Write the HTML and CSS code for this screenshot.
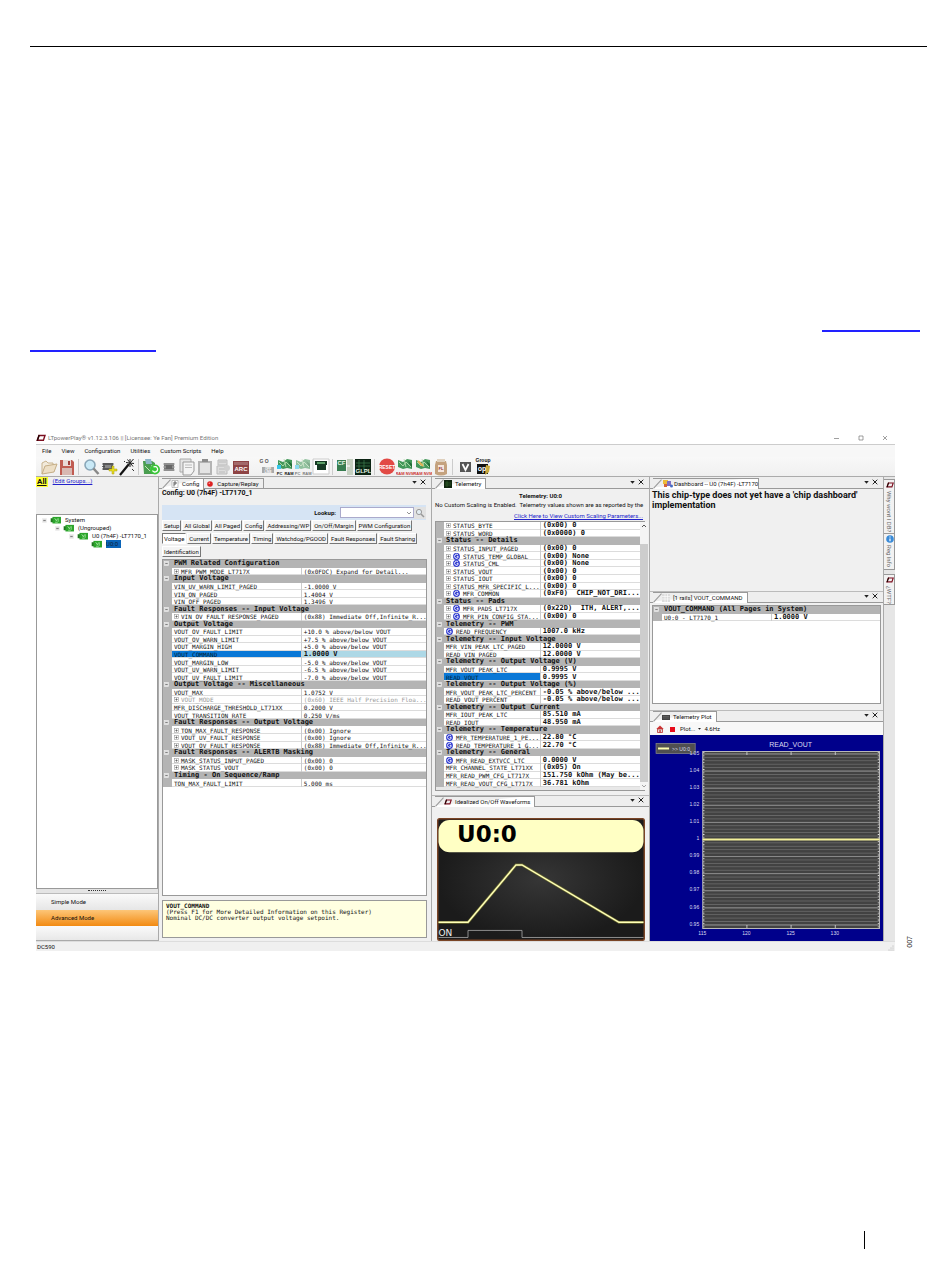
FILE: index.html
```html
<!DOCTYPE html>
<html lang="en">
<head>
<meta charset="utf-8">
<title>LTpowerPlay</title>
<link rel="stylesheet" href="styles.css">
</head>
<body>
<svg class="defs" aria-hidden="true">
  <symbol id="plus" viewBox="0 0 5 5"><rect x=".5" y=".5" width="4" height="4" fill="#fff" stroke="#999" stroke-width=".6"/><path d="M1.3 2.5h2.4M2.5 1.3v2.4" stroke="#444" stroke-width=".6"/></symbol>
  <symbol id="minus" viewBox="0 0 5 5"><rect x=".5" y=".5" width="4" height="4" fill="#ddd" stroke="#eee" stroke-width=".6"/><path d="M1.3 2.5h2.4" stroke="#444" stroke-width=".6"/></symbol>
  <symbol id="g" viewBox="0 0 8 8"><circle cx="4" cy="4" r="3.9" fill="#2a35cf"/><path d="M5.9 2.5A2.3 2.3 0 1 0 6 5V4.2H4.2" fill="none" stroke="#fff" stroke-width="1.1"/></symbol>
  <symbol id="lt" viewBox="0 0 10 8"><path d="M3 1.500h6L7.400 6.300H1.200z" fill="none" stroke="#7c0f20" stroke-width="1.400"/><path d="M3.200 1L1.400 6.600" stroke="#200" stroke-width="1.400"/></symbol>
  <symbol id="board" viewBox="0 0 12 9"><rect x="2" y="1" width="9.6" height="7.4" fill="#2ba52b"/><path d="M0 2.5h2.5v4.5H0z" fill="#1d7a1d"/><path d="M4.5 2.5l2 3 1-2.500M8.500 2.500v4M5 7h3" stroke="#b4efb0" stroke-width=".8" fill="none"/></symbol>
  <symbol id="ram" viewBox="0 0 18 18"><path d="M2 2l5 2 4-3 5 1v9l-5-1-4 1-5-2z" fill="#43985a"/><path d="M3 4l4 4 3-4 5 5M8 1l2 8" stroke="#b6ddb0" stroke-width=".9" fill="none"/><path d="M12 3l4 3v4z" fill="#216b36"/></symbol>
  <symbol id="menu" viewBox="0 0 6 4"><path d="M0 0h6L3 3.500z" fill="#222"/></symbol>
  <symbol id="close" viewBox="0 0 6 6"><path d="M.7.7l4.600 4.600M5.300.7L.7 5.300" stroke="#222" stroke-width="1"/></symbol>
</svg>

<div class="page">
  <div class="rule"></div>
  <div class="links"><span class="ul end"></span><span class="ul start"></span></div>

  <div class="figure">
  <main class="app">
    <header class="titlebar">
      <svg class="logo"><use href="#lt"/></svg>
      <span class="caption">LTpowerPlay® v1.12.3.106 || [Licensee: Ye Fan] Premium Edition</span>
      <button class="win" aria-label="Minimize"><svg viewBox="0 0 6 6"><path d="M0 3.500h5" stroke="#777" stroke-width=".7"/></svg></button>
      <button class="win" aria-label="Maximize"><svg viewBox="0 0 6 6"><path d="M1 1h4v4H1z" stroke="#777" stroke-width=".7" fill="none"/></svg></button>
      <button class="win" aria-label="Close"><svg viewBox="0 0 6 6"><path d="M1 1l4 4M5 1L1 5" stroke="#777" stroke-width=".7"/></svg></button>
    </header>
    <nav class="menubar"><button>File</button><button>View</button><button>Configuration</button><button>Utilities</button><button>Custom Scripts</button><button>Help</button></nav>

    <div class="toolbar">
      <button aria-label="Open"><svg viewBox="0 0 18 18"><path d="M2 16V5l4-2 2 2h5v4" fill="#f2eadb" stroke="#c9b48f"/><path d="M2 16l3-8 12-2-3 8z" fill="#eddfc6" stroke="#c5ae86"/></svg></button>
      <button aria-label="Save"><svg viewBox="0 0 18 18"><path d="M2 2h12l2 2v13H2z" fill="#c05c52"/><path d="M5 2h8v6H5z" fill="#e9d9d6"/><path d="M10 3h2v4h-2z" fill="#a13f3a"/><path d="M4 10h10v7H4z" fill="#d8b8b2"/></svg></button>
      <i class="sep"></i>
      <button aria-label="Find"><svg viewBox="0 0 18 18"><circle cx="8" cy="7" r="5" fill="#c9e9f6" stroke="#8aa7b8" stroke-width="1.600"/><path d="M11.500 10.500l5 5.500" stroke="#888" stroke-width="2.500"/></svg></button>
      <button aria-label="Add chip"><svg viewBox="0 0 18 18"><path d="M3 5h10v7H3z" fill="#666"/><path d="M2 6h12M2 8.500h12M2 11h12" stroke="#444" stroke-width=".8"/><path d="M5 7h6v3H5z" fill="#888"/><path d="M12 8h2v3h3v2h-3v3h-2v-3H9v-2h3z" fill="#e6dc22" stroke="#a99c10" stroke-width=".5"/></svg></button>
      <button aria-label="Wizard"><svg viewBox="0 0 18 18"><path d="M2 17L11 6" stroke="#111" stroke-width="2.200"/><path d="M12 1v8M8 4.500l8 1M9.500 1.500l5.500 7M15.500 1l-6 7" stroke="#222" stroke-width="1"/><path d="M14 11l2 2M6 3l1 1" stroke="#333"/></svg></button>
      <i class="sep"></i>
      <button aria-label="Refresh board"><svg viewBox="0 0 18 18"><path d="M1 3h9l3 2v11H2z" fill="#4a9e50"/><path d="M3 1h6l1 5H4z" fill="#8fb7c9"/><path d="M3 8l5 5 2-6" stroke="#c3e6ba" fill="none"/><circle cx="13" cy="11.500" r="5" fill="#39c638"/><path d="M10.500 12.500a2.700 2.700 0 1 0 1-3.500" stroke="#fff" stroke-width="1.300" fill="none"/></svg></button>
      <button aria-label="Chip"><svg viewBox="0 0 18 18"><path d="M4 5h10v8H4z" fill="#777"/><path d="M3 6h12M3 9h12M3 12h12" stroke="#aaa"/><path d="M6 7h6v4H6z" fill="#666"/></svg></button>
      <button aria-label="Note"><svg viewBox="0 0 18 18"><path d="M2 1h11v13H2z" fill="#e5e5e5" stroke="#aaa"/><path d="M5 4h11v9l-3 4H5z" fill="#f4f4f4" stroke="#999"/><path d="M7 7h7M7 9.500h7" stroke="#bbb"/></svg></button>
      <button aria-label="Paste"><svg viewBox="0 0 18 18"><path d="M2 3h14v14H2z" fill="#b4b4b4"/><path d="M4 5h10v10H4z" fill="#e4e4e4"/><path d="M6 1h6v3H6z" fill="#8d8d8d"/></svg></button>
      <button aria-label="Documents"><svg viewBox="0 0 18 18"><path d="M4 2h9v5H4zM3 8h10v8H3z" fill="#ddd" stroke="#bbb"/><path d="M5 4h7M5 11h6M5 14h6" stroke="#bbb"/><circle cx="13" cy="10" r="3" fill="#cfcfcf"/></svg></button>
      <button aria-label="ARC"><svg viewBox="0 0 18 18"><path d="M1 3h16v13H1z" fill="#8e4344"/><path d="M2 4h14v3H2z" fill="#a3696a"/><text x="9" y="13" class="i-arc">ARC</text></svg></button>
      <button class="go" aria-label="Go offline"><svg viewBox="0 0 18 18"><text x="6" y="5" class="i-go">G O</text><path d="M4 9h12v6H4z" fill="#aaa"/><text x="10" y="11.500" class="i-tiny">OFF</text><text x="10" y="15" class="i-tiny">LINE</text></svg></button>
      <button aria-label="PC to RAM"><svg viewBox="0 0 18 18"><use href="#ram"/><path d="M1 7h4v4H1z" fill="#38c4e8"/><text x="3.500" y="17" class="i-lbl">PC</text><text x="13" y="17" class="i-lbl">RAM</text></svg></button>
      <button class="dim" aria-label="RAM to PC"><svg viewBox="0 0 18 18"><use href="#ram"/><path d="M1 7h4v4H1z" fill="#38c4e8"/><text x="3.500" y="17" class="i-lbl">PC</text><text x="13" y="17" class="i-lbl">RAM</text></svg></button>
      <button aria-label="Program"><svg viewBox="0 0 18 18"><path d="M1 1h16v15H1z" fill="#fff" stroke="#ccc"/><path d="M3 3h12v4h-1v5H5V7H3z" fill="#173b25"/><path d="M5 5h8" stroke="#74c27e" stroke-width="1.500"/></svg></button>
      <i class="sep"></i>
      <button aria-label="Config file"><svg viewBox="0 0 18 18"><path d="M1 2h9v11H1z" fill="#377d50"/><text x="5.500" y="7" class="i-cf">CF</text><path d="M11 1h6v16h-6z" fill="#c5d0c0"/><path d="M10 8h4" stroke="#fff"/></svg></button>
      <button aria-label="Graph"><svg viewBox="0 0 18 18"><path d="M1 1h16v16H1z" fill="#0b2413"/><path d="M2 5h14M2 8h14M5 2v10M10 2v10" stroke="#3e7e4e" stroke-width=".7"/><text x="9.500" y="15" class="i-glp">GLPL</text></svg></button>
      <i class="sep"></i>
      <button aria-label="Reset"><svg viewBox="0 0 18 18"><circle cx="9" cy="8.500" r="8" fill="#e24a45"/><text x="9" y="11" class="i-rst">RESET</text></svg></button>
      <button aria-label="RAM to NVM"><svg viewBox="0 0 18 18"><use href="#ram"/><text x="9" y="16.500" class="i-red">RAM NVM</text></svg></button>
      <button aria-label="NVM to RAM"><svg viewBox="0 0 18 18"><use href="#ram"/><path d="M4 3l5 5" stroke="#e3b557" stroke-width="2"/><text x="9" y="16.500" class="i-red">RAM NVM</text></svg></button>
      <button aria-label="Fault log"><svg viewBox="0 0 18 18"><path d="M4 3h10l1 4v9q-6 3-12 0V7z" fill="#c4a27e"/><path d="M5 1h8v3H5z" fill="#dfd0bd"/><path d="M6 7h6v7H6z" fill="#f6e6de"/><text x="9" y="12" class="i-fl">FL</text></svg></button>
      <i class="sep"></i>
      <button aria-label="Voltage"><svg viewBox="0 0 18 18"><path d="M4 4h11v10H4z" fill="#555"/><path d="M6.500 6l3 6 3-6" stroke="#fff" stroke-width="1.700" fill="none"/></svg></button>
      <button aria-label="Group operation"><svg viewBox="0 0 18 18"><text x="9" y="4" class="i-grp">Group</text><path d="M3 6h11v10H3z" fill="#111"/><path d="M12 7l4 1-1 6-4 3z" fill="#c7a93e"/><text x="8" y="13" class="i-op">op</text></svg></button>
    </div>

    <div class="panes">
      <section class="nav">
        <div class="navhead"><b>All</b><a href="#">(Edit Groups...)</a></div>
        <ul class="tree">
          <li><svg class="x"><use href="#minus"/></svg><svg class="bd"><use href="#board"/></svg>System</li>
          <li class="l1"><svg class="x"><use href="#minus"/></svg><svg class="bd"><use href="#board"/></svg>(Ungrouped)</li>
          <li class="l2"><svg class="x"><use href="#minus"/></svg><svg class="bd"><use href="#board"/></svg>U0 (7h4F) -LT7170_1</li>
          <li class="l3"><svg class="bd"><use href="#board"/></svg><span class="sel">U0:0</span></li>
        </ul>
        <div class="grip"></div>
        <button class="mode">Simple Mode</button>
        <button class="mode on">Advanced Mode</button>
        <div class="navfoot"></div>
      </section>

      <section class="config">
        <div class="tabs">
          <button class="tab on"><svg viewBox="0 0 8 8"><path d="M1 .5h6v7H1z" fill="#fff" stroke="#999" stroke-width=".6"/><path d="M3 6.500V2h2v2H3" stroke="#444" stroke-width=".8" fill="none"/></svg>Config</button><button class="tab"><svg viewBox="0 0 8 8"><circle cx="4" cy="4" r="2.800" fill="#d22"/><circle cx="3.300" cy="3.200" r=".8" fill="#f99"/></svg>Capture/Replay</button>
          <span class="ctl"><svg class="dn"><use href="#menu"/></svg><svg class="cl"><use href="#close"/></svg></span>
        </div>
        <h2 class="cfgtitle">Config: U0 (7h4F) -LT7170_1</h2>
        <div class="lookup"><label for="lk">Lookup:</label><select id="lk"><option></option></select><svg class="chev" viewBox="0 0 8 8"><path d="M2 3l2 2 2-2" fill="none" stroke="#777" stroke-width=".8"/></svg><button aria-label="Search"><svg viewBox="0 0 10 10"><circle cx="4" cy="4" r="2.600" fill="#e3edf2" stroke="#999"/><path d="M6 6l3 3" stroke="#999" stroke-width="1.500"/></svg></button></div>
        <div class="btns">
          <div><button>Setup</button><button>All Global</button><button>All Paged</button><button>Config</button><button>Addressing/WP</button><button>On/Off/Margin</button><button>PWM Configuration</button></div>
          <div><button class="on">Voltage</button><button>Current</button><button>Temperature</button><button>Timing</button><button>Watchdog/PGOOD</button><button>Fault Responses</button><button>Fault Sharing</button></div>
          <div><button>Identification</button></div>
        </div>
        <div class="sheet">
        <table class="props cfg">
          <colgroup><col class="gut"><col class="nm"><col></colgroup>
          <tr class="cat"><td><svg><use href="#minus"/></svg></td><th colspan="2">PWM Related Configuration</th></tr>
          <tr><td></td><td><svg><use href="#plus"/></svg>MFR_PWM_MODE_LT717X</td><td>(0x0FDC) Expand for Detail...</td></tr>
          <tr class="cat"><td><svg><use href="#minus"/></svg></td><th colspan="2">Input Voltage</th></tr>
          <tr><td></td><td>VIN_UV_WARN_LIMIT_PAGED</td><td>-1.0000 V</td></tr>
          <tr><td></td><td>VIN_ON_PAGED</td><td>1.4004 V</td></tr>
          <tr><td></td><td>VIN_OFF_PAGED</td><td>1.3496 V</td></tr>
          <tr class="cat"><td><svg><use href="#minus"/></svg></td><th colspan="2">Fault Responses -- Input Voltage</th></tr>
          <tr><td></td><td><svg><use href="#plus"/></svg>VIN_OV_FAULT_RESPONSE_PAGED</td><td>(0x88) Immediate Off,Infinite_R...</td></tr>
          <tr class="cat"><td><svg><use href="#minus"/></svg></td><th colspan="2">Output Voltage</th></tr>
          <tr><td></td><td>VOUT_OV_FAULT_LIMIT</td><td>+10.0 % above/below VOUT</td></tr>
          <tr><td></td><td>VOUT_OV_WARN_LIMIT</td><td>+7.5 % above/below VOUT</td></tr>
          <tr><td></td><td>VOUT_MARGIN_HIGH</td><td>+5.0 % above/below VOUT</td></tr>
          <tr class="pick"><td></td><td>VOUT_COMMAND</td><td>1.0000 V</td></tr>
          <tr><td></td><td>VOUT_MARGIN_LOW</td><td>-5.0 % above/below VOUT</td></tr>
          <tr><td></td><td>VOUT_UV_WARN_LIMIT</td><td>-6.5 % above/below VOUT</td></tr>
          <tr><td></td><td>VOUT_UV_FAULT_LIMIT</td><td>-7.0 % above/below VOUT</td></tr>
          <tr class="cat"><td><svg><use href="#minus"/></svg></td><th colspan="2">Output Voltage -- Miscellaneous</th></tr>
          <tr><td></td><td>VOUT_MAX</td><td>1.0752 V</td></tr>
          <tr class="off"><td></td><td><svg><use href="#plus"/></svg>VOUT_MODE</td><td>(0x60) IEEE Half Precision Floa...</td></tr>
          <tr><td></td><td>MFR_DISCHARGE_THRESHOLD_LT71XX</td><td>0.2000 V</td></tr>
          <tr><td></td><td>VOUT_TRANSITION_RATE</td><td>0.250 V/ms</td></tr>
          <tr class="cat"><td><svg><use href="#minus"/></svg></td><th colspan="2">Fault Responses -- Output Voltage</th></tr>
          <tr><td></td><td><svg><use href="#plus"/></svg>TON_MAX_FAULT_RESPONSE</td><td>(0x00) Ignore</td></tr>
          <tr><td></td><td><svg><use href="#plus"/></svg>VOUT_UV_FAULT_RESPONSE</td><td>(0x00) Ignore</td></tr>
          <tr><td></td><td><svg><use href="#plus"/></svg>VOUT_OV_FAULT_RESPONSE</td><td>(0x88) Immediate Off,Infinite_R...</td></tr>
          <tr class="cat"><td><svg><use href="#minus"/></svg></td><th colspan="2">Fault Responses -- ALERTB Masking</th></tr>
          <tr><td></td><td><svg><use href="#plus"/></svg>MASK_STATUS_INPUT_PAGED</td><td>(0x00) 0</td></tr>
          <tr><td></td><td><svg><use href="#plus"/></svg>MASK_STATUS_VOUT</td><td>(0x00) 0</td></tr>
          <tr class="cat"><td><svg><use href="#minus"/></svg></td><th colspan="2">Timing - On Sequence/Ramp</th></tr>
          <tr><td></td><td>TON_MAX_FAULT_LIMIT</td><td>5.000 ms</td></tr>
        </table>
        </div>
        <div class="help"><b>VOUT_COMMAND</b><br>(Press F1 for More Detailed Information on this Register)<br>Nominal DC/DC converter output voltage setpoint.</div>
      </section>

      <section class="tele">
        <div class="tabs">
          <button class="tab on"><svg viewBox="0 0 8 8"><path d="M0 0h8v8H0z" fill="#10260f"/><path d="M1 3h6M1 5h6M3 1v6" stroke="#3e7a35" stroke-width=".5"/></svg>Telemetry</button>
          <span class="ctl"><svg class="dn"><use href="#menu"/></svg><svg class="cl"><use href="#close"/></svg></span>
        </div>
        <h2 class="teltitle">Telemetry: U0:0</h2>
        <p class="note">No Custom Scaling is Enabled.&nbsp; Telemetry values shown are as reported by the</p>
        <a class="scal" href="#">Click Here to View Custom Scaling Parameters...</a>
        <div class="telwrap">
        <table class="props tel">
          <colgroup><col class="gut"><col class="nm"><col></colgroup>
          <tr><td></td><td><svg><use href="#plus"/></svg>STATUS_BYTE</td><td>(0x00) 0</td></tr>
          <tr><td></td><td><svg><use href="#plus"/></svg>STATUS_WORD</td><td>(0x0000) 0</td></tr>
          <tr class="cat"><td><svg><use href="#minus"/></svg></td><th colspan="2">Status -- Details</th></tr>
          <tr><td></td><td><svg><use href="#plus"/></svg>STATUS_INPUT_PAGED</td><td>(0x00) 0</td></tr>
          <tr><td></td><td><svg><use href="#plus"/></svg><svg class="gi"><use href="#g"/></svg>STATUS_TEMP_GLOBAL</td><td>(0x00) None</td></tr>
          <tr><td></td><td><svg><use href="#plus"/></svg><svg class="gi"><use href="#g"/></svg>STATUS_CML</td><td>(0x00) None</td></tr>
          <tr><td></td><td><svg><use href="#plus"/></svg>STATUS_VOUT</td><td>(0x00) 0</td></tr>
          <tr><td></td><td><svg><use href="#plus"/></svg>STATUS_IOUT</td><td>(0x00) 0</td></tr>
          <tr><td></td><td><svg><use href="#plus"/></svg>STATUS_MFR_SPECIFIC_L...</td><td>(0x00) 0</td></tr>
          <tr><td></td><td><svg><use href="#plus"/></svg><svg class="gi"><use href="#g"/></svg>MFR_COMMON</td><td>(0xF0)&nbsp; CHIP_NOT_DRI...</td></tr>
          <tr class="cat"><td><svg><use href="#minus"/></svg></td><th colspan="2">Status -- Pads</th></tr>
          <tr><td></td><td><svg><use href="#plus"/></svg><svg class="gi"><use href="#g"/></svg>MFR_PADS_LT717X</td><td>(0x22D)&nbsp; ITH, ALERT,...</td></tr>
          <tr><td></td><td><svg><use href="#plus"/></svg><svg class="gi"><use href="#g"/></svg>MFR_PIN_CONFIG_STA...</td><td>(0x00) 0</td></tr>
          <tr class="cat"><td><svg><use href="#minus"/></svg></td><th colspan="2">Telemetry -- PWM</th></tr>
          <tr><td></td><td><svg class="gi"><use href="#g"/></svg>READ_FREQUENCY</td><td>1007.0 kHz</td></tr>
          <tr class="cat"><td><svg><use href="#minus"/></svg></td><th colspan="2">Telemetry -- Input Voltage</th></tr>
          <tr><td></td><td>MFR_VIN_PEAK_LTC_PAGED</td><td>12.0000 V</td></tr>
          <tr><td></td><td>READ_VIN_PAGED</td><td>12.0000 V</td></tr>
          <tr class="cat"><td><svg><use href="#minus"/></svg></td><th colspan="2">Telemetry -- Output Voltage (V)</th></tr>
          <tr><td></td><td>MFR_VOUT_PEAK_LTC</td><td>0.9995 V</td></tr>
          <tr class="picked"><td></td><td>READ_VOUT</td><td>0.9995 V</td></tr>
          <tr class="cat"><td><svg><use href="#minus"/></svg></td><th colspan="2">Telemetry -- Output Voltage (%)</th></tr>
          <tr><td></td><td>MFR_VOUT_PEAK_LTC_PERCENT</td><td>-0.05 % above/below ...</td></tr>
          <tr><td></td><td>READ_VOUT_PERCENT</td><td>-0.05 % above/below ...</td></tr>
          <tr class="cat"><td><svg><use href="#minus"/></svg></td><th colspan="2">Telemetry -- Output Current</th></tr>
          <tr><td></td><td>MFR_IOUT_PEAK_LTC</td><td>85.510 mA</td></tr>
          <tr><td></td><td>READ_IOUT</td><td>48.950 mA</td></tr>
          <tr class="cat"><td><svg><use href="#minus"/></svg></td><th colspan="2">Telemetry -- Temperature</th></tr>
          <tr><td></td><td><svg class="gi"><use href="#g"/></svg>MFR_TEMPERATURE_1_PE...</td><td>22.80 °C</td></tr>
          <tr><td></td><td><svg class="gi"><use href="#g"/></svg>READ_TEMPERATURE_1_G...</td><td>22.70 °C</td></tr>
          <tr class="cat"><td><svg><use href="#minus"/></svg></td><th colspan="2">Telemetry -- General</th></tr>
          <tr><td></td><td><svg class="gi"><use href="#g"/></svg>MFR_READ_EXTVCC_LTC</td><td>0.0000 V</td></tr>
          <tr><td></td><td>MFR_CHANNEL_STATE_LT71XX</td><td>(0x05) On</td></tr>
          <tr><td></td><td>MFR_READ_PWM_CFG_LT717X</td><td>151.750 kOhm (May be...</td></tr>
          <tr><td></td><td>MFR_READ_VOUT_CFG_LT717X</td><td>36.781 kOhm</td></tr>
        </table>
        <div class="scroll"><svg viewBox="0 0 8 8"><path d="M2 5l2-2 2 2" fill="none" stroke="#444" stroke-width=".9"/></svg><i></i><svg viewBox="0 0 8 8"><path d="M2 3l2 2 2-2" fill="none" stroke="#999" stroke-width=".9"/></svg></div>
        </div>
        <div class="tabs mid">
          <button class="tab on"><svg><use href="#lt"/></svg>Idealized On/Off Waveforms</button>
          <span class="ctl"><svg class="dn"><use href="#menu"/></svg><svg class="cl"><use href="#close"/></svg></span>
        </div>
        <svg class="scope" viewBox="0 0 208 122" preserveAspectRatio="none">
          <defs><radialGradient id="sg"><stop offset="0" stop-color="#363636"/><stop offset="1" stop-color="#1b1b1b"/></radialGradient></defs>
          <rect x=".7" y=".7" width="206.600" height="120.600" rx="2" fill="url(#sg)" stroke="#7a4526" stroke-width="1.500"/>
          <rect x="1.500" y="2" width="205" height="32" rx="11" fill="#ffffc4"/>
          <text x="20" y="24" class="s-name">U0:0</text>
          <path d="M1.500 103.500H31L79 46.500h6L182 103.500h24.500" fill="none" stroke="#6b6b30" stroke-width="2.800"/>
          <path d="M1.500 103.500H31L79 46.500h6L182 103.500h24.500" fill="none" stroke="#ffffb8" stroke-width="1.500"/>
          <path d="M1.500 118.500H31v-7h54v7h121.500" fill="none" stroke="#a9a9a9" stroke-width=".8"/>
          <text x="1.500" y="117" class="s-on">ON</text>
        </svg>
      </section>

      <section class="right">
        <div class="tabs">
          <button class="tab on dash"><svg viewBox="0 0 11 8"><path d="M1 0h5v4H1z" fill="#edbb38"/><path d="M5 1h4v5H5z" fill="#7f6fc4"/><path d="M2 4h3v3H2z" fill="#d5643a"/><circle cx="9.500" cy="6" r="1.500" fill="#456cc4"/></svg>Dashboard -- U0 (7h4F) -LT7170</button>
          <span class="ctl"><svg class="dn"><use href="#menu"/></svg><svg class="cl"><use href="#close"/></svg></span>
        </div>
        <p class="msg">This chip-type does not yet have a 'chip dashboard'<br>implementation</p>
        <div class="tabs mid">
          <button class="tab on"><svg viewBox="0 0 8 8"><path d="M0 0h8v8H0z" fill="#ddd"/><path d="M0 2.500h8M0 5h8M3 0v8M5.500 0v8" stroke="#fff" stroke-width=".6"/></svg>[1 rails] VOUT_COMMAND</button>
          <span class="ctl"><svg class="dn"><use href="#menu"/></svg><svg class="cl"><use href="#close"/></svg></span>
        </div>
        <div class="railbox">
        <table class="props rail">
          <colgroup><col class="gut"><col class="nm"><col></colgroup>
          <tr class="cat"><td><svg><use href="#minus"/></svg></td><th colspan="2">VOUT_COMMAND (All Pages in System)</th></tr>
          <tr><td></td><td>U0:0 - LT7170_1</td><td>1.0000 V</td></tr>
        </table>
        </div>
        <div class="tabs mid">
          <button class="tab on"><svg viewBox="0 0 8 8"><path d="M0 2h8v5H0z" fill="#444"/><path d="M1 3.500h6M1 5h6" stroke="#777" stroke-width=".5"/></svg>Telemetry Plot</button>
          <span class="ctl"><svg class="dn"><use href="#menu"/></svg><svg class="cl"><use href="#close"/></svg></span>
        </div>
        <div class="plotbar">
          <button aria-label="Home"><svg viewBox="0 0 8 8"><path d="M4 .5L.3 4h7.400z" fill="#c33"/><path d="M1.500 4h5v3.500h-5z" fill="#eadada" stroke="#b33" stroke-width=".8"/><path d="M3.400 5h1.300v2.500H3.400z" fill="#b33"/></svg></button>
          <button aria-label="Stop"><svg viewBox="0 0 8 8"><path d="M2 2h5v5H2z" fill="#e80c1c"/></svg></button>
          <button>Plot...</button><svg class="sm"><use href="#menu"/></svg><span>4.6Hz</span>
        </div>
        <svg class="plot" viewBox="0 0 232 206" preserveAspectRatio="none">
          <defs>
            <pattern id="minor" width="176" height="3.420" patternUnits="userSpaceOnUse" y="18.500"><path d="M0 .5h176" stroke="#686868" stroke-width=".9"/></pattern>
            <pattern id="major" width="176" height="17.100" patternUnits="userSpaceOnUse" y="18.500"><path d="M0 .5h176" stroke="#8c8c8c" stroke-width="1"/></pattern>
          </defs>
          <rect width="232" height="206" fill="#00008b"/>
          <rect x="52.500" y="16.500" width="176" height="177" fill="#424242"/>
          <rect x="52.500" y="18" width="176" height="175" fill="url(#minor)"/>
          <rect x="52.500" y="18" width="176" height="175" fill="url(#major)"/>
          <rect x="52.500" y="16.500" width="176" height="177" fill="none" stroke="#b9b9b9"/>
          <path d="M53.500 17v176M227.500 17v176" stroke="#ddd" stroke-width="1.500" stroke-dasharray=".8 2.620"/>
          <path d="M96.500 17v3M140.500 17v3M184.500 17v3M96.500 190v3M140.500 190v3M184.500 190v3" stroke="#ddd" stroke-width=".8"/>
          <path d="M52.500 104.500h176" stroke="#f3f09a" stroke-width="2.200"/>
          <rect x="6" y="8.500" width="39" height="10" fill="#505050" stroke="#8a8a8a" stroke-width=".7"/>
          <path d="M8 13.500h11" stroke="#ffffb0" stroke-width="2"/>
          <text x="22" y="16" class="p-lbl">&gt;&gt; U0:0</text>
          <text x="140" y="12" class="p-title">READ_VOUT</text>
          <g class="p-y"><text x="49" y="20">1.05</text><text x="49" y="37">1.04</text><text x="49" y="54">1.03</text><text x="49" y="71">1.02</text><text x="49" y="88">1.01</text><text x="49" y="105">1</text><text x="49" y="122">0.99</text><text x="49" y="139">0.98</text><text x="49" y="156">0.97</text><text x="49" y="174">0.96</text><text x="49" y="191">0.95</text></g>
          <g class="p-x"><text x="52" y="200">115</text><text x="96" y="200">120</text><text x="140" y="200">125</text><text x="184" y="200">130</text></g>
        </svg>
      </section>

      <aside class="strip">
        <div><button><svg><use href="#lt"/></svg>Why wont I DB?</button><button><svg viewBox="0 0 8 8"><circle cx="4" cy="4" r="3.800" fill="#3a8bd8"/><path d="M4 3.400v2.800M4 1.600v1" stroke="#fff" stroke-width="1.200"/></svg>Reg Info</button></div>
        <div><button><svg><use href="#lt"/></svg>¿WTF?</button></div>
      </aside>
    </div>
    <footer class="status"><span>DC590</span><svg viewBox="0 0 6 6"><path d="M5 1v.1M3 3v.1M5 3v.1M1 5v.1M3 5v.1M5 5v.1" stroke="#aaa" stroke-linecap="round"/></svg></footer>
  </main>
  <div class="fignum">007</div>
  </div>
  <div class="foot"><i></i></div>
</div>
</body>
</html>
```

FILE: styles.css
```css
* { box-sizing: border-box; }
body { margin: 0; background: #fff; color: #111; font: 6px/8px Roboto, "Noto Sans", sans-serif; }
button, select { font: inherit; color: inherit; margin: 0; padding: 0; border: 0; background: none; border-radius: 0; white-space: nowrap; }
a { color: #22c; }
p, h2, ul { margin: 0; padding: 0; font-size: inherit; }
svg { display: block; flex: none; }
.defs { position: absolute; width: 0; height: 0; }
.page { min-height: 100vh; display: flex; flex-direction: column; }

.rule { margin: 46px 23px 0 30px; border-top: 1px solid #000; }
.links { margin: 283px 30px 0; display: flex; flex-direction: column; gap: 18px; }
.ul { border-top: 2px solid #22f; }
.ul.end { width: 98px; align-self: flex-end; }
.ul.start { width: 126px; }

.figure { display: flex; align-items: flex-end; margin: 79px 36px 0 36px; gap: 10px; }
.fignum { writing-mode: vertical-rl; transform: rotate(180deg); font: 7px/9px "Liberation Sans", sans-serif; padding-top: 3px; }
.app { flex: 1; min-width: 0; background: #f0f0f0; }
.titlebar { display: flex; align-items: center; height: 14px; background: #fff; color: #777; padding-right: 7px; border-bottom: 1px solid #ccc; }
.logo { width: 10px; height: 8px; margin-right: 2px; }
.caption { flex: 1; }
.win { width: 6px; height: 6px; margin-left: 18px; }
.win svg { width: 6px; height: 6px; }
.menubar { display: flex; gap: 10px; padding: 2px 6px; height: 12px; background: #f7f7f7; }
.toolbar { display: flex; align-items: center; height: 20px; padding-left: 4px; background: linear-gradient(#f8f8f8, #f0f0f0); border-bottom: 1px solid #ababab; }
.toolbar button { width: 18px; height: 18px; }
.toolbar svg { width: 18px; height: 18px; }
.toolbar .go { margin-left: 8px; }
.toolbar .dim { opacity: .55; }
.sep { width: 1px; height: 16px; margin: 0 3px 0 2px; background: #ccc; }
.toolbar text { text-anchor: middle; font-family: "Liberation Sans", sans-serif; font-weight: bold; }
.i-arc { font-size: 6px; fill: #fff; }
.i-go { font-size: 5px; fill: #555; }
.i-tiny { font-size: 3px; fill: #fff; }
.i-lbl { font-size: 4px; fill: #111; }
.i-cf, .i-glp { font-size: 6px; fill: #e5f6e5; }
.i-rst { font-size: 5px; fill: #fff; }
.i-red { font-size: 4px; fill: #c33; }
.i-fl { font-size: 4px; fill: #833; }
.i-grp { font-size: 5px; fill: #111; }
.i-op { font-size: 7px; fill: #fff; }

.panes { display: grid; grid-template-columns: 123fr 273fr 218fr 233fr 12px; grid-template-rows: minmax(0, 1fr); height: 464px; }
.panes > section { min-width: 0; display: flex; flex-direction: column; }
.nav { border-right: 1px solid #aaa; }
.navhead { display: flex; gap: 5px; height: 37px; }
.navhead b { align-self: flex-start; background: #ff3; text-decoration: underline; font-size: 8px; line-height: 10px; padding: 0 1px; }
.tree { flex: 1; list-style: none; background: #fff; border: 1px solid #999; padding: 1px 0 0 5px; }
.tree li { display: flex; align-items: center; height: 8px; gap: 3px; white-space: nowrap; }
.tree .x { width: 5px; height: 5px; }
.tree .bd { width: 12px; height: 8px; }
.tree .l1 { margin-left: 13px; }
.tree .l2 { margin-left: 27px; }
.tree .l3 { margin-left: 49px; }
.sel { background: #0a64b8; color: #123; padding-right: 3px; }
.grip { height: 5px; background: #e4e4e4; border-bottom: 1px solid #bbb; }
.grip::before { content: ""; display: block; width: 18px; margin: 1px auto 0; border-top: 1px dotted #333; }
.mode { height: 16px; text-align: left; padding-left: 15px; background: linear-gradient(#fafafa, #e6e6e6); }
.mode.on { background: linear-gradient(#fdc678, #f28a12); }
.navfoot { height: 15px; background: linear-gradient(#fafafa, #e8e8e8); border-bottom: 1px solid #aaa; }

.tabs { display: flex; align-items: flex-end; height: 12px; background: #eee; border-bottom: 1px solid #999; padding-left: 3px; flex: none; }
.tabs.mid { border-top: 1px solid #bbb; }
.tab { display: flex; align-items: center; gap: 3px; height: 10px; padding: 0 4px 0 2px; border: 1px solid #999; border-width: 1px 1px 0 0; position: relative; }
.tab.on { background: linear-gradient(to bottom right, #eee 8px, #fff 9px); height: 11px; padding-left: 9px; margin-bottom: -1px; }
.tab.on::before { content: ""; position: absolute; left: 4px; top: -1px; height: 12px; border-left: 1px solid #999; transform: rotate(42deg); }
.tab svg { width: 8px; height: 8px; }
.tab.dash { gap: 1px; padding: 0 0 0 9px; }
.tab.dash svg { width: 11px; }
.ctl { margin-left: auto; display: flex; align-items: center; gap: 3px; height: 12px; padding-right: 5px; }
.dn { width: 5px; height: 3px; }
.cl { width: 6px; height: 6px; }

.config { border-right: 1px solid #aaa; padding: 0 0 3px 3px; }
.config .tabs { margin-left: -3px; }
.cfgtitle { height: 16px; font-size: 7px; }
.lookup { display: flex; align-items: center; justify-content: flex-end; gap: 4px; height: 15px; margin-right: 5px; background: #d6e4f4; font-weight: bold; flex: none; }
.lookup select { appearance: none; width: 74px; height: 11px; background: #fff; border: 1px solid #aac; }
.lookup button { width: 12px; height: 12px; background: #e2e2e2; margin-left: -3px; padding: 1px; }
.lookup svg { width: 10px; height: 10px; }
.lookup .chev { width: 8px; height: 8px; margin-left: -13px; }
.btns { display: flex; flex-direction: column; gap: 2px; padding: 0 0 2px; }
.btns div { display: flex; gap: 1px; }
.btns button { height: 11px; padding: 0 1px; line-height: 8px; border: 1px solid #777; border-color: #fff #777 #777 #fff; background: #f4f4f4; }
.btns .on { background: #fff; border-color: #777 #fff #fff #777; }
.sheet { flex: 1; min-height: 0; background: #fff; border: 1px solid #999; margin-right: 4px; }
.help { height: 38px; margin: 4px 4px 0 0; padding: 2px 3px; background: #ffffe1; border: 1px solid #999; font: 6px/6px "DejaVu Sans Mono", monospace; white-space: nowrap; flex: none; }

.props { width: 100%; border-spacing: 0; table-layout: fixed; background: #fff; font: 6px/7px "DejaVu Sans Mono", monospace; }
.props td, .props th { padding: 0 0 0 2px; height: 7px; text-align: left; vertical-align: middle; white-space: nowrap; box-shadow: inset 0 -1px #dcdcdc; }
.props td:first-child { background: #b4b4b4; box-shadow: none; padding-left: 1px; }
.props td:nth-child(3) { border-left: 1px solid #ccc; }
.props .cat th { background: #b4b4b4; box-shadow: none; font-size: 7px; }
.props svg { display: inline-block; vertical-align: top; width: 5px; height: 5px; margin: 1px 2px 0 0; }
.props svg.gi { width: 7px; height: 7px; margin: 0 3px 0 0; }
.cfg { height: 227px; }
.cfg .gut { width: 9px; }
.cfg .nm { width: 49%; }
.off { color: #999; }
.props .pick td:nth-child(2), .props .picked td:nth-child(2) { background: #0a78d7; color: #023; }
.props .pick td:nth-child(3) { background: #add8e6; font-size: 7px; font-weight: bold; }

.tele { border-right: 1px solid #aaa; }
.teltitle { text-align: center; padding-top: 3px; height: 12px; }
.note { padding-left: 3px; white-space: nowrap; height: 11px; }
.scal { align-self: flex-end; margin: 0 6px 1px 0; white-space: nowrap; }
.telwrap { display: flex; align-items: flex-start; margin: 0 4px 4px 3px; height: 270px; border: 1px solid #999; background: #e8e8e8; flex: none; }
.tel { flex: 1; width: auto; height: 265px; }
.tel .gut { width: 9px; }
.tel .nm { width: 48%; }
.tel td:nth-child(3) { font-weight: bold; font-size: 7px; }
.scroll { width: 8px; align-self: stretch; display: flex; flex-direction: column; background: #f4f4f4; }
.scroll svg { width: 8px; height: 8px; }
.scroll i { flex: 1; margin-top: 14px; background: #cdcdcd; }
.scope { flex: 1; min-height: 0; width: calc(100% - 9px); margin: 11px 5px 0 5px; }
.s-name { font: bold 23px "DejaVu Sans", sans-serif; fill: #000; }
.s-on { font: 9px "DejaVu Sans", sans-serif; fill: #eee; }

.msg { font: bold 9px/10px Roboto, sans-serif; padding: 1px 2px; height: 102px; flex: none; }
.railbox { margin: 2px 2px 6px 2px; height: 99px; background: #fff; border: 1px solid #999; flex: none; }
.rail { height: 15px; }
.rail .gut { width: 9px; }
.rail .nm { width: 48%; }
.rail td:nth-child(3) { font-weight: bold; font-size: 7px; }
.plotbar { display: flex; align-items: center; gap: 4px; height: 13px; padding-left: 6px; background: #f8f8f8; flex: none; }
.plotbar button svg { width: 8px; height: 8px; }
.sm { width: 3px; height: 2px; margin: 0 -1px; }
.plot { flex: 1; min-height: 0; width: 100%; }
.plot text { font-family: "Liberation Sans", sans-serif; font-size: 5px; fill: #dcdcf0; }
.plot .p-title { font-size: 7px; text-anchor: middle; }
.p-y text { text-anchor: end; }
.p-x text { text-anchor: middle; }

.strip { border-left: 1px solid #aaa; background: #e6e6e6; padding-top: 2px; display: flex; flex-direction: column; gap: 4px; color: #666; }
.strip div { border: 1px solid #999; background: #f2f2f2; border-left: 0; }
.strip button { writing-mode: vertical-rl; display: flex; align-items: center; gap: 2px; padding: 1px; font-size: 6px; line-height: 9px; }
.strip button + button { border-top: 1px solid #999; }
.strip svg { width: 8px; height: 8px; }
.status { display: flex; justify-content: space-between; align-items: flex-end; height: 10px; background: #f0f0f0; border-top: 1px solid #ddd; padding: 0 1px; }
.status svg { width: 6px; height: 6px; }
.foot { margin: auto 85px 18px auto; padding-top: 20px; }
.foot i { display: block; height: 18px; border-left: 1px solid #000; }
```
